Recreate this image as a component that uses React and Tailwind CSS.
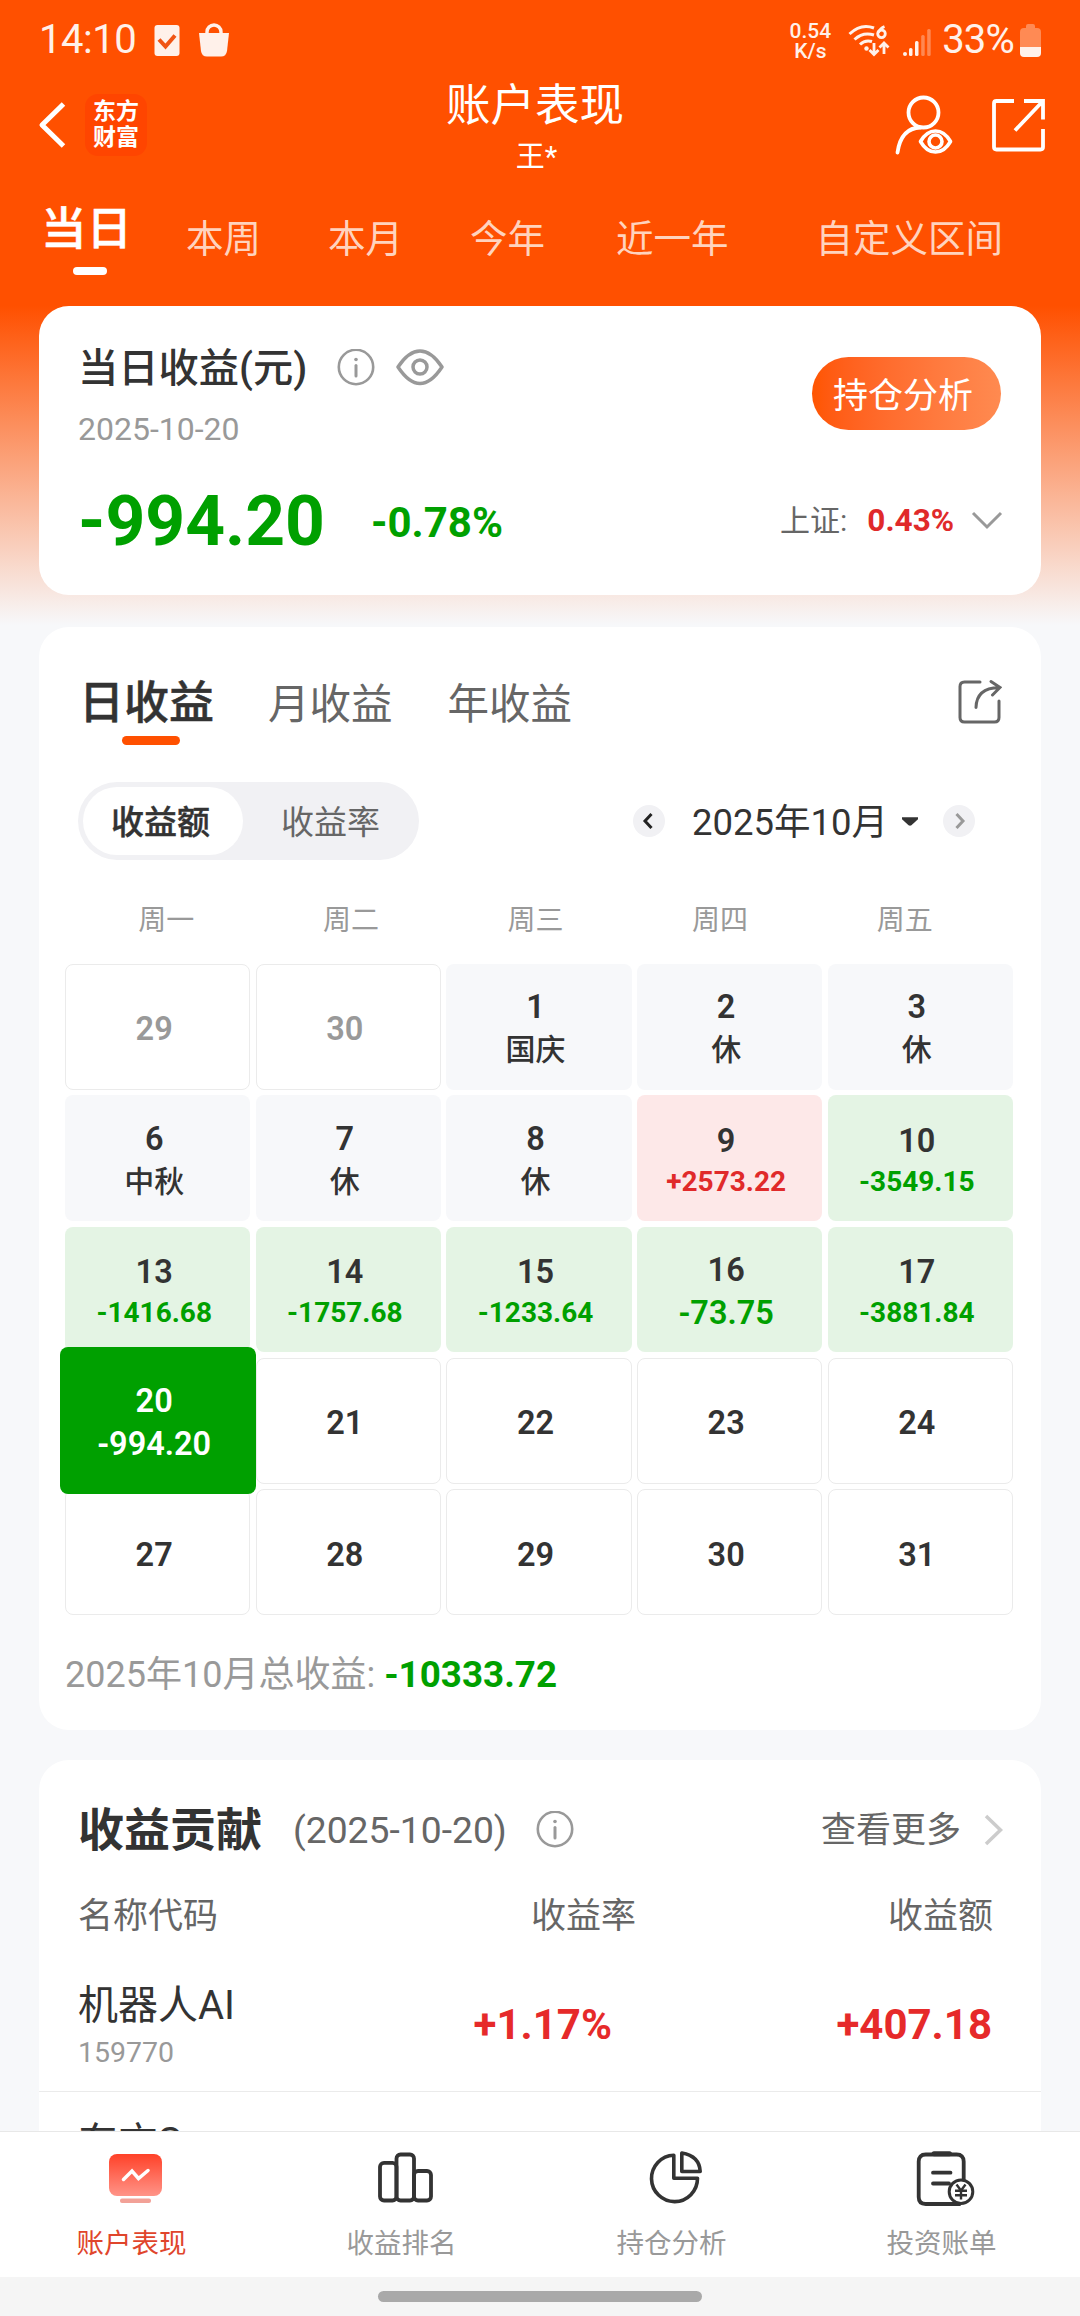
import React from 'react';

const periods = [
  { label: '本周', className: 'ml-[54px]' },
  { label: '本月', className: 'ml-[67px]' },
  { label: '今年', className: 'ml-[67px]' },
  { label: '近一年', className: 'ml-[71px]' },
  { label: '自定义区间', className: 'ml-[87px]' },
];

const weekdays = ['周一', '周二', '周三', '周四', '周五'];

// type: out = other month, rest = market closed, up / down = traded, today = selected
const days = [
  { day: 29, type: 'out' },
  { day: 30, type: 'out' },
  { day: 1, type: 'rest', note: '国庆' },
  { day: 2, type: 'rest', note: '休' },
  { day: 3, type: 'rest', note: '休' },
  { day: 6, type: 'rest', note: '中秋' },
  { day: 7, type: 'rest', note: '休' },
  { day: 8, type: 'rest', note: '休' },
  { day: 9, type: 'up', note: '+2573.22' },
  { day: 10, type: 'down', note: '-3549.15' },
  { day: 13, type: 'down', note: '-1416.68' },
  { day: 14, type: 'down', note: '-1757.68' },
  { day: 15, type: 'down', note: '-1233.64' },
  { day: 16, type: 'down', note: '-73.75' },
  { day: 17, type: 'down', note: '-3881.84' },
  { day: 20, type: 'today', note: '-994.20' },
  { day: 21 },
  { day: 22 },
  { day: 23 },
  { day: 24 },
  { day: 27 },
  { day: 28 },
  { day: 29 },
  { day: 30 },
  { day: 31 },
];

const cellStyles = {
  out: 'border border-[#ebebeb] pt-1 text-[#999]',
  rest: 'bg-[#f7f8fa] pt-[5px] text-[#333]',
  up: 'bg-[#fde8e8] pt-[6px] text-[#333]',
  down: 'bg-[#e4f4e4] pt-[6px] text-[#333]',
  today: 'z-10 pt-[5px] text-white',
  plain: 'border border-[#ebebeb] pt-[5px] text-[#333]',
};

const InfoIcon = () => (
  <svg className="h-[38px] w-[38px]" viewBox="0 0 38 38" fill="none" stroke="#999" strokeWidth="2.6">
    <circle cx="19" cy="18" r="17.2" />
    <path d="M19 16.5V27" strokeWidth="3" strokeLinecap="round" />
    <circle cx="19" cy="10.5" r="1.8" fill="#999" stroke="none" />
  </svg>
);

const StatusBar = () => (
  <div className="flex h-20 items-center pr-[39px] pl-[39px] text-[#fff1ea]">
    <span className="text-[40px] leading-none tracking-[-0.5px]">14:10</span>
    <svg className="ml-[18px] h-[34px] w-[26px]" viewBox="0 0 26 34">
      <rect x="0.5" y="2" width="25" height="31" rx="3" fill="currentColor" />
      <path d="M5 16.5l6.5 7L21 12.5" fill="none" stroke="#f05414" strokeWidth="4" />
    </svg>
    <svg className="ml-[18px] h-[34px] w-8" viewBox="0 0 32 34">
      <path d="M9 11V9a7 7 0 0 1 14 0v2" fill="none" stroke="currentColor" strokeWidth="3.4" />
      <path d="M1 10h30l-2 18q-.8 5.500-6 5.500H9q-5.200 0-6-5.500z" fill="currentColor" />
    </svg>
    <div className="mr-[2px] ml-auto flex flex-col items-center pt-[2px] text-[21px] leading-[20px] font-medium">
      <span>0.54</span>
      <span>K/s</span>
    </div>
    <svg className="ml-[15px] h-[34px] w-[42px]" viewBox="0 0 42 34" fill="none" stroke="currentColor" strokeWidth="3">
      <path d="M1.5 11Q13 0 26 5" />
      <path d="M6.5 16.500Q15 8.500 26 12" />
      <path d="M12 21.500q5-5 12-3" />
      <circle cx="18.500" cy="25.500" r="2.200" fill="currentColor" stroke="none" />
      <path d="M36.500 3.500q-4 1.500-6.300 6" strokeWidth="2.800" />
      <circle cx="33.500" cy="10.800" r="3.800" strokeWidth="2.800" />
      <path d="M26 20v11M21.500 27l4.500 4.500 4.500-4.500M36 31V20M31.500 24.500l4.500-4.500 4.500 4.500" strokeWidth="2.800" />
    </svg>
    <svg className="ml-[13px] h-[34px] w-7" viewBox="0 0 28 34" fill="currentColor">
      <circle cx="2" cy="31" r="2" />
      <rect x="6" y="25" width="3.5" height="8" rx="1.5" />
      <rect x="12" y="18" width="3.5" height="15" rx="1.5" />
      <rect x="18.2" y="12" width="3.5" height="21" rx="1.5" opacity=".35" />
      <rect x="24.2" y="6" width="3.5" height="27" rx="1.5" opacity=".35" />
    </svg>
    <span className="ml-[11px] text-[40px] leading-none tracking-[-0.8px]">33%</span>
    <svg className="ml-[6px] h-[34px] w-[21px]" viewBox="0 0 21 34">
      <path d="M6 5V3q0-2 2-2h5q2 0 2 2v2h2q4 0 4 4v15H0V9q0-4 4-4z" fill="#ff8a54" />
      <path d="M0 24h21v6q0 4-4 4H4q-4 0-4-4z" fill="currentColor" />
    </svg>
  </div>
);

const Header = () => (
  <header className="flex h-[110px] items-center pr-[34px] pl-[38px] text-white">
    <div className="flex w-[356px] items-center pb-5">
      <svg className="h-[46px] w-7" viewBox="0 0 28 46" fill="none" stroke="#fff" strokeWidth="5">
        <path d="M25.5 2L4 23l21.5 21" strokeLinejoin="round" />
      </svg>
      <div className="ml-[19px] flex h-[62px] w-[62px] flex-col items-center justify-center rounded-[13px] bg-[#ff4500] text-[23px] leading-[26px] font-bold">
        <span>东方</span>
        <span>财富</span>
      </div>
    </div>
    <div className="flex flex-1 flex-col items-center pb-[11px]">
      <h1 className="text-[44.5px] leading-[55px]">账户表现</h1>
      <div className="ml-[3px] text-[29px] leading-[46px]">王*</div>
    </div>
    <div className="flex w-[370px] items-center justify-end pb-5">
      <svg className="h-[60px] w-[60px]" viewBox="0 0 60 60" fill="none" stroke="#fff" strokeWidth="3.8">
        <circle cx="30.5" cy="17.5" r="15" />
        <path d="M4.5 57.500Q8 33 27.500 32.500" strokeLinecap="round" />
        <path d="M27.500 46.500Q33.500 36 42.500 36t15 10.500Q51.500 57 42.500 57T27.500 46.500z" strokeWidth="3.6" strokeLinejoin="round" />
        <circle cx="42.500" cy="46.500" r="6.500" strokeWidth="3.6" />
      </svg>
      <svg className="ml-[37px] h-[56px] w-[56px]" viewBox="0 0 56 56" fill="none" stroke="#fff" strokeWidth="3.8">
        <path d="M24 4H6.500Q4 4 4 6.500v43.500Q4 52.500 6.500 52.500h44q2.500 0 2.500-2.500V32" />
        <path d="M34 4H53V22.500M53 4L25 33.500" />
      </svg>
    </div>
  </header>
);

const PeriodTabs = () => (
  <nav className="flex h-[116px] items-start pl-[41px] text-[37.5px] leading-[56px] text-[#ffd3be]">
    <div className="flex w-[91px] flex-col items-center pt-[2px]">
      <span className="text-[45.5px] leading-[75px] font-medium text-white [-webkit-text-stroke:0.5px]">当日</span>
      <span className="ml-[7px] h-2 w-[34px] rounded-full bg-white" />
    </div>
    {periods.map((item) => (
      <span key={item.label} className={`pt-[21px] ${item.className}`}>
        {item.label}
      </span>
    ))}
  </nav>
);

const SummaryCard = () => (
  <section className="flex h-[289px] justify-between rounded-[30px] bg-white pr-[38px] pl-[39px]">
    <div>
      <div className="flex items-center pt-[33px]">
        <h2 className="pt-[2px] text-[40.25px] leading-[56px] font-medium text-[#333]">当日收益(元)</h2>
        <span className="ml-[30px]">
          <InfoIcon />
        </span>
        <svg className="ml-[21px] h-[38px] w-[48px]" viewBox="0 0 48 38" fill="none" stroke="#999" strokeWidth="3.5">
          <path d="M2 18C8 9 15 2 24 2S40 9 46 18C40 27 33 34.500 24 34.500S8 27 2 18z" strokeLinejoin="round" />
          <circle cx="24" cy="18" r="7" />
        </svg>
      </div>
      <div className="mt-[13px] text-[32px] leading-[38px] text-[#999]">2025-10-20</div>
      <div className="mt-[34px] flex items-center font-bold text-[#00a000]">
        <span className="text-[69.5px] leading-[80px]">-994.20</span>
        <span className="ml-[46px] text-[42px]">-0.78%</span>
      </div>
    </div>
    <div className="flex flex-col items-end pt-[51px]">
      <button className="mr-[2px] h-[73px] w-[189px] rounded-full bg-gradient-to-r from-[#ff5500] to-[#ff8a50] pt-[6px] pr-[7px] text-[35px] leading-[67px] text-white">
        持仓分析
      </button>
      <div className="mt-[69px] flex items-center text-[30px] leading-[44px] text-[#666]">
        上证:
        <span className="ml-[20px] text-[31.5px] font-bold text-[#e02a2a]">0.43%</span>
        <svg className="ml-[17px] h-5 w-8" viewBox="0 0 32 20" fill="none" stroke="#999" strokeWidth="3">
          <path d="M2 2l14 14 14-14" />
        </svg>
      </div>
    </div>
  </section>
);

const DayCell = ({ day, type = 'plain', note }) => {
  const isAmount = type === 'up' || type === 'down';
  const small = isAmount && note.length > 7;
  const noteColor = type === 'up' ? 'text-[#e02a2a]' : type === 'down' ? 'text-[#00a000]' : '';

  return (
    <div
      className={`relative flex flex-col items-center justify-center rounded-lg pr-[7px] font-semibold ${cellStyles[type]}`}
    >
      {/* the selected day is larger than its slot */}
      {type === 'today' && (
        <div className="absolute -top-[11px] -right-[6px] -bottom-[10px] -left-[5px] rounded-lg bg-[#00a000]" />
      )}
      <span className="relative text-[32.5px] leading-[42px]">{day}</span>
      {note && (
        <span
          className={`relative ${noteColor} ${
            small ? 'text-[28px] leading-[40px] font-bold' : type === 'rest' ? 'text-[30px] leading-[44px] font-medium' : 'text-[32.5px] leading-[44px]'
          }`}
        >
          {note}
        </span>
      )}
    </div>
  );
};

const CalendarCard = () => (
  <section className="mt-8 h-[1103px] rounded-[30px] bg-white">
    <div className="flex h-[155px] items-start pt-[45px] pr-[39px] pl-[40px] text-[41.5px] leading-[64px] text-[#666]">
      <div className="flex flex-col items-center">
        <span className="text-[45px] font-medium text-[#333] [-webkit-text-stroke:0.5px]">日收益</span>
        <span className="ml-[9px] h-[9px] w-[58px] rounded-full bg-[#ff5000]" />
      </div>
      <span className="ml-[54px] pt-px">月收益</span>
      <span className="ml-[55px] pt-px">年收益</span>
      <svg className="mt-[6px] ml-auto h-[46px] w-[46px]" viewBox="0 0 46 46" fill="none" stroke="#666" strokeWidth="3" strokeLinecap="round">
        <path d="M24 4H8.500Q4 4 4 8.500v31Q4 44 8.500 44h30q4.500 0 4.500-4.500V23" />
        <path d="M20 29.500Q20.500 10 43 9.500M35 3.500l9 6-7.500 7.500" />
      </svg>
    </div>
    <div className="flex items-center pr-[66px] pl-[39px]">
      <div className="flex h-[78px] w-[341px] rounded-full bg-[#f1f1f4] p-[5px] text-[33px] leading-[71px] text-[#666]">
        <span className="h-[68px] w-[160px] rounded-full bg-white pr-[5px] text-center font-medium text-[#333] [-webkit-text-stroke:0.4px]">收益额</span>
        <span className="flex-1 pl-[4px] text-center">收益率</span>
      </div>
      <svg className="ml-auto h-8 w-8" viewBox="0 0 32 32" fill="none">
        <circle cx="16" cy="16" r="16" fill="#f1f1f4" />
        <path d="M18.500 9L12 16l6.500 7" stroke="#222" strokeWidth="3" />
      </svg>
      <span className="ml-[27px] pt-[3px] text-[36.5px] leading-[50px] text-[#333]">2025年10月</span>
      <svg className="ml-[14px] h-[9px] w-[16px]" viewBox="0 0 17 9" fill="#333">
        <path d="M0 0h17v2L10 8.500q-1.500 1-3 0L0 2z" />
      </svg>
      <svg className="ml-[25px] h-8 w-8" viewBox="0 0 32 32" fill="none">
        <circle cx="16" cy="16" r="16" fill="#f1f1f4" />
        <path d="M13.500 9l6.500 7-6.500 7" stroke="#999" strokeWidth="3" />
      </svg>
    </div>
    <div className="mt-[39px] ml-[35px] grid w-[923px] grid-cols-5 text-center text-[28px] leading-[44px] text-[#999]">
      {weekdays.map((name) => (
        <span key={name}>{name}</span>
      ))}
    </div>
    <div className="mt-[21px] ml-[26px] grid h-[651px] w-[948px] grid-cols-5 grid-rows-5 gap-x-[5.3px] gap-y-[5.3px]">
      {days.map((item, i) => (
        <DayCell key={i} {...item} />
      ))}
    </div>
    <div className="mt-[34px] flex items-center pl-[26px] text-[36px] leading-[52px] text-[#999]">
      2025年10月总收益:
      <span className="ml-[9px] text-[36.8px] font-bold text-[#00a000]">-10333.72</span>
    </div>
  </section>
);

const ContributionCard = () => (
  <section className="mt-[30px] rounded-t-[30px] bg-white text-[#666]">
    <div className="flex items-center pt-[37px] pr-[37px] pl-[39px]">
      <h2 className="text-[46px] leading-[66px] font-bold text-[#333]">收益贡献</h2>
      <span className="ml-[31px] pt-px text-[37.25px]">(2025-10-20)</span>
      <span className="ml-[29px] pb-px">
        <InfoIcon />
      </span>
      <span className="ml-auto pt-[2px] text-[35px]">查看更多</span>
      <svg className="ml-[23px] h-8 w-5" viewBox="0 0 20 32" fill="none" stroke="#ccc" strokeWidth="3.5">
        <path d="M2 2l14.500 14L2 30" />
      </svg>
    </div>
    <div className="mt-[28px] grid grid-cols-[1fr_246px_357px] pr-[48px] pl-[39px] text-right text-[35px] leading-[52px]">
      <span className="text-left">名称代码</span>
      <span>收益率</span>
      <span>收益额</span>
    </div>
    <div className="mt-[9px] grid h-[140px] grid-cols-[1fr_246px_380px] items-center border-b border-[#ebebeb] pt-[6px] pr-[49px] pl-[39px] text-right text-[42px] font-bold text-[#e62a2a]">
      <div className="text-left font-normal">
        <div className="text-[40px] leading-[56px] text-[#333]">机器人AI</div>
        <div className="text-[28.5px] leading-[38px] text-[#999]">159770</div>
      </div>
      <span>+1.17%</span>
      <span>+407.18</span>
    </div>
    <div className="pt-[23px] pl-[39px] text-[40px] leading-[56px] text-[#333]">东方S</div>
  </section>
);

const navItems = [
  {
    label: '账户表现',
    active: true,
    icon: (
      <svg className="h-[56px] w-[60px]" viewBox="0 0 60 56">
        <defs>
          <linearGradient id="perf" x1="0" y1="0" x2="0" y2="1">
            <stop offset="0" stopColor="#ff4128" />
            <stop offset="1" stopColor="#ff9488" />
          </linearGradient>
        </defs>
        <rect x="4" y="3" width="53" height="42" rx="8" fill="url(#perf)" />
        <path d="M18.500 28.500l8.500-8.500 6.500 7.500L43 19.500" fill="none" stroke="#fff" strokeWidth="3.5" strokeLinecap="round" />
        <rect x="15" y="47.500" width="31" height="4.5" rx="2" fill="#f2a197" />
      </svg>
    ),
  },
  {
    label: '收益排名',
    icon: (
      <svg className="h-[56px] w-[60px]" viewBox="0 0 60 56" fill="none" stroke="#333" strokeWidth="3.8">
        <rect x="5" y="11.800" width="16.5" height="37.7" rx="4" />
        <rect x="21.500" y="3.500" width="17.5" height="46" rx="4" />
        <rect x="39" y="20" width="17" height="29.5" rx="4" />
      </svg>
    ),
  },
  {
    label: '持仓分析',
    icon: (
      <svg className="h-[56px] w-[60px]" viewBox="0 0 60 56" fill="none" stroke="#333" strokeWidth="3.6" strokeLinejoin="round">
        <path d="M28.800 4.200A23 23.200 0 1 0 52.500 27.300H28.800z" />
        <path d="M36.800 2v18.500H55.200Q54.500 5 36.800 2z" />
      </svg>
    ),
  },
  {
    label: '投资账单',
    icon: (
      <svg className="h-[58px] w-[62px]" viewBox="0 0 62 58" fill="none" stroke="#333" strokeWidth="3.8">
        <path d="M49.700 30V11.500q0-7-7-7h-31q-7 0-7 7v35.500q0 7 7 7h35" />
        <path d="M20 3.800h15.500" strokeWidth="5" strokeLinecap="round" />
        <path d="M19 22.700h17.500M19 33.500h16" strokeLinecap="round" />
        <circle cx="47" cy="41.700" r="11.800" fill="#fff" strokeWidth="3" />
        <path d="M42.500 34.500l4.500 6 4.500-6M47 40.500v9M41 40.800h12M41 45.200h12" strokeWidth="2.4" />
      </svg>
    ),
  },
];

const BottomNav = () => (
  <footer className="absolute inset-x-0 bottom-0 z-20">
    <div className="grid h-[146px] grid-cols-4 border-t border-[#e8e8e8] bg-white">
      {navItems.map((item) => (
        <div key={item.label} className="flex flex-col items-center pt-[18px]">
          <div className="flex h-[58px] items-center">{item.icon}</div>
          <span className={`mt-[16px] pr-[7px] text-[27.5px] leading-10 ${item.active ? 'text-[#e0452c]' : 'text-[#999]'}`}>
            {item.label}
          </span>
        </div>
      ))}
    </div>
    <div className="flex h-[39px] justify-center bg-[#f5f5f5] pt-[14px]">
      <div className="h-[11px] w-[324px] rounded-full bg-[#a9a9a9]" />
    </div>
  </footer>
);

export default function App() {
  return (
    <div className="relative h-[2316px] w-[1080px] overflow-hidden bg-[#f7f8fa] bg-[linear-gradient(180deg,#ff5000_0,#ff5000_306px,#f7f8fa_625px)] font-[Roboto,'Noto_Sans_CJK_SC',sans-serif]">
      <StatusBar />
      <Header />
      <PeriodTabs />
      <main className="px-[39px]">
        <SummaryCard />
        <CalendarCard />
        <ContributionCard />
      </main>
      <BottomNav />
    </div>
  );
}
